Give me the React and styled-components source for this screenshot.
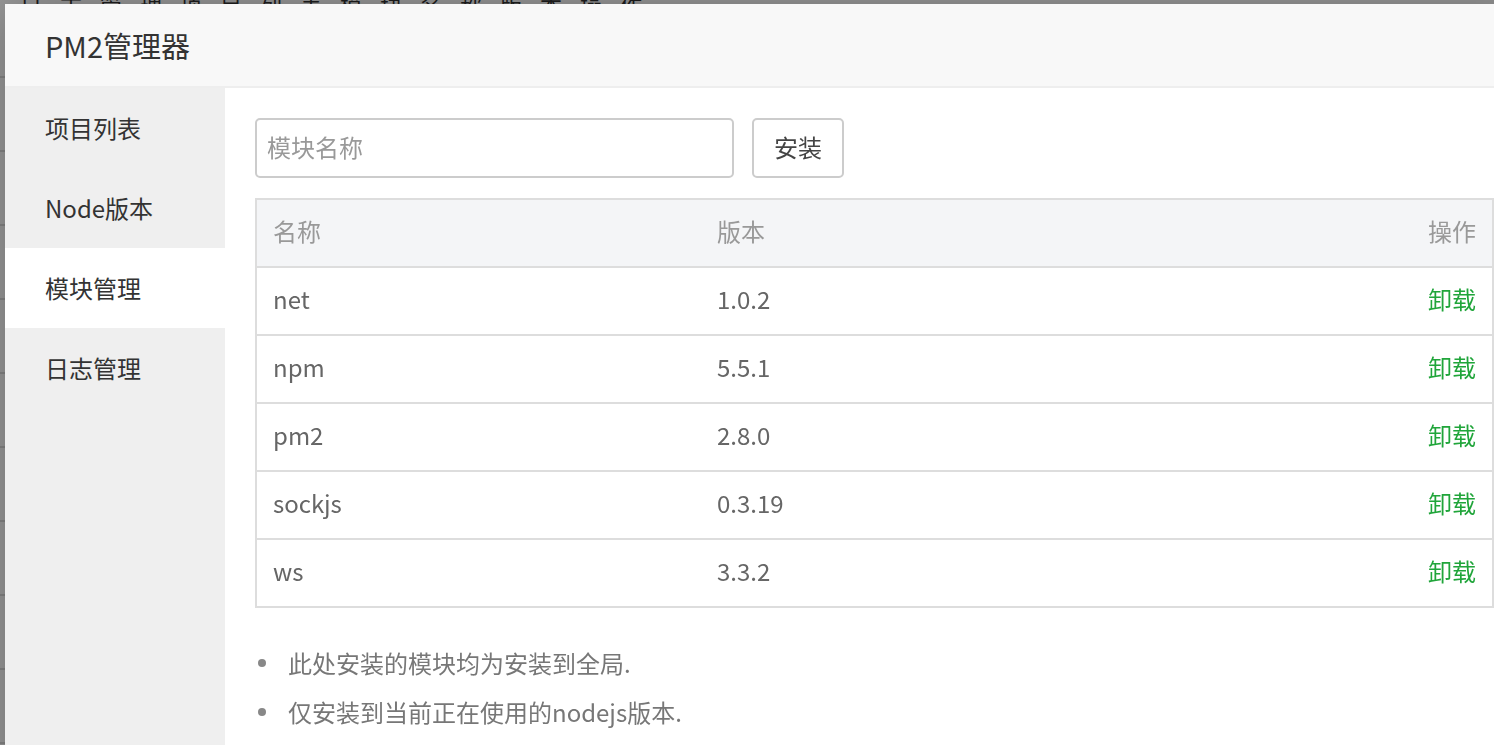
import React from 'react';
import styled, { createGlobalStyle } from 'styled-components';

const GlobalStyle = createGlobalStyle`
  html, body {
    margin: 0;
    padding: 0;
    overflow: hidden;
    background: #ffffff;
  }
  body {
    font-family: "Noto Sans CJK SC", "Noto Sans", sans-serif;
    color: #333;
  }
`;

/* page under the dialog, only its edges show */
const BgPage = styled.div`
  height: 745px;
`;

const BgTopText = styled.div`
  height: 4px;
  overflow: hidden;
  padding-left: 20px;
  font-size: 22px;
  line-height: 8px;
  color: #333;
  letter-spacing: 18px;
  white-space: nowrap;
`;

const BgRow = styled.div`
  height: 72px;
  border-bottom: 2px solid #dcdcdc;
  &:first-of-type {
    height: 117px;
  }
`;

const Shade = styled.div`
  position: fixed;
  inset: 0;
  background: rgba(0, 0, 0, 0.4);
`;

const Dialog = styled.div`
  position: fixed;
  top: 4px;
  left: 5px;
  width: calc(100vw + 25px);
  height: calc(100vh + 40px);
  background: #fff;
  box-shadow: 1px 1px 50px rgba(0, 0, 0, 0.3);
  display: flex;
  flex-direction: column;
`;

const Title = styled.div`
  height: 82px;
  line-height: 82px;
  padding-left: 40px;
  background: #f8f8f8;
  border-bottom: 2px solid #eee;
  font-size: 29px;
  color: #333;
`;

const Body = styled.div`
  flex: 1;
  display: flex;
`;

const Menu = styled.div`
  width: 220px;
  background: #efefef;
  flex-shrink: 0;
`;

const MenuItem = styled.div`
  height: 80px;
  line-height: 80px;
  padding-left: 40px;
  font-size: 24px;
  color: #333;
  background: ${p => (p.$active ? '#fff' : 'transparent')};
`;

const Content = styled.div`
  flex: 1;
  padding: 30px 30px 0 30px;
`;

const FormRow = styled.div`
  display: flex;
  gap: 18px;
`;

const NameInput = styled.input`
  box-sizing: border-box;
  width: 479px;
  height: 60px;
  border: 2px solid #ccc;
  border-radius: 5px;
  padding: 0 10px 4px;
  font-family: inherit;
  font-size: 24px;
  color: #555;
  outline: none;
  &::placeholder {
    color: #999;
  }
`;

const InstallButton = styled.button`
  box-sizing: border-box;
  width: 92px;
  height: 60px;
  border: 2px solid #ccc;
  border-radius: 5px;
  background: #fff;
  font-family: inherit;
  font-size: 24px;
  color: #444;
  padding: 0 0 3px;
`;

const Table = styled.table`
  width: 100%;
  margin-top: 20px;
  border-collapse: collapse;
  border: 2px solid #ddd;
`;

const Th = styled.th`
  height: 60px;
  padding: 0 16px 6px;
  background: #f4f5f7;
  color: #999;
  font-size: 24px;
  font-weight: normal;
  text-align: ${p => (p.$right ? 'right' : 'left')};
  border-bottom: 2px solid #ddd;
`;

const Td = styled.td`
  height: 60px;
  padding: 0 16px 6px;
  color: #666;
  font-size: 24px;
  text-align: ${p => (p.$right ? 'right' : 'left')};
  border-bottom: 2px solid #ddd;
`;

const RemoveLink = styled.a`
  color: #20a53a;
  text-decoration: none;
  cursor: pointer;
`;

const Tips = styled.ul`
  list-style: none;
  margin: 30px 0 0 0;
  padding: 0;
`;

const Tip = styled.li`
  position: relative;
  padding-left: 33px;
  line-height: 49px;
  font-size: 24px;
  color: #777;
  &::before {
    content: '';
    position: absolute;
    left: 3px;
    top: 21px;
    width: 8px;
    height: 8px;
    border-radius: 50%;
    background: #888;
  }
`;

const modules = [
  { name: 'net', version: '1.0.2' },
  { name: 'npm', version: '5.5.1' },
  { name: 'pm2', version: '2.8.0' },
  { name: 'sockjs', version: '0.3.19' },
  { name: 'ws', version: '3.3.2' },
];

const menu = ['项目列表', 'Node版本', '模块管理', '日志管理'];

export default function App() {
  return (
    <>
      <GlobalStyle />
      <BgPage>
        <BgTopText>日志管理项目列表模块名称版本操作</BgTopText>
        {Array.from({ length: 10 }).map((_, i) => (
          <BgRow key={i} />
        ))}
      </BgPage>
      <Shade />
      <Dialog>
        <Title>PM2管理器</Title>
        <Body>
          <Menu>
            {menu.map(m => (
              <MenuItem key={m} $active={m === '模块管理'}>
                {m}
              </MenuItem>
            ))}
          </Menu>
          <Content>
            <FormRow>
              <NameInput placeholder="模块名称" />
              <InstallButton>安装</InstallButton>
            </FormRow>
            <Table>
              <colgroup>
                <col style={{ width: '445px' }} />
                <col />
                <col />
              </colgroup>
              <thead>
                <tr>
                  <Th>名称</Th>
                  <Th>版本</Th>
                  <Th $right>操作</Th>
                </tr>
              </thead>
              <tbody>
                {modules.map(m => (
                  <tr key={m.name}>
                    <Td>{m.name}</Td>
                    <Td>{m.version}</Td>
                    <Td $right>
                      <RemoveLink>卸载</RemoveLink>
                    </Td>
                  </tr>
                ))}
              </tbody>
            </Table>
            <Tips>
              <Tip>此处安装的模块均为安装到全局.</Tip>
              <Tip>仅安装到当前正在使用的nodejs版本.</Tip>
            </Tips>
          </Content>
        </Body>
      </Dialog>
    </>
  );
}
